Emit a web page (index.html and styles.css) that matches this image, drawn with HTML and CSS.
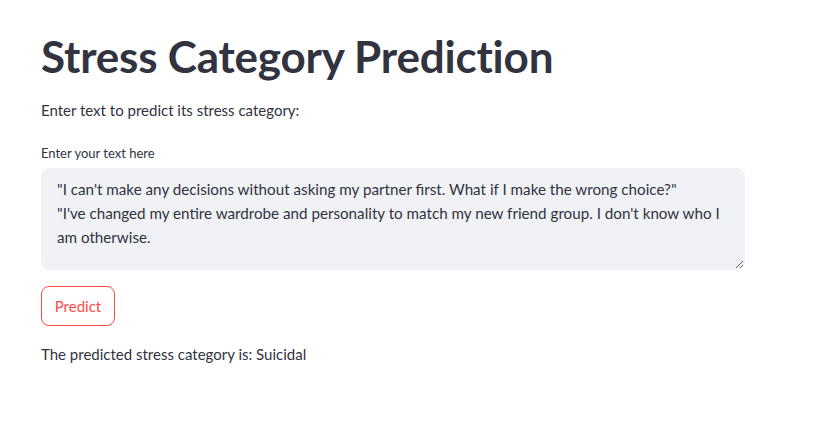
FILE: index.html
```html
<!DOCTYPE html>
<html>
<head>
<meta charset="utf-8">
<link rel="stylesheet" href="styles.css">
</head>
<body>
<main class="main">
  <h1 class="title">Stress Category Prediction</h1>
  <p class="intro">Enter text to predict its stress category:</p>
  <div class="field">
    <label class="label" for="t">Enter your text here</label>
    <textarea id="t" class="area">"I can't make any decisions without asking my partner first. What if I make the wrong choice?"
"I've changed my entire wardrobe and personality to match my new friend group. I don't know who I am otherwise.</textarea>
  </div>
  <button class="btn">Predict</button>
  <p class="result">The predicted stress category is: Suicidal</p>
</main>
</body>
</html>
```
FILE: styles.css
```css
html, body { margin: 0; padding: 0; background: #fff; }
body {
  font-family: "Lato", "Open Sans", sans-serif;
  color: rgb(49, 51, 63);
  font-size: 15px;
}
.main {
  width: 704px;
  padding: 26px 0 0 41px;
  display: flex;
  flex-direction: column;
}
.title {
  margin: 0;
  font-size: 44px;
  font-weight: 700;
  line-height: 60px;
  letter-spacing: -0.2px;
}
.intro {
  margin: 12px 0 0;
  line-height: 24px;
}
.field {
  margin-top: 21px;
  display: flex;
  flex-direction: column;
}
.label {
  font-size: 13px;
  line-height: 20px;
  margin-bottom: 5px;
}
.area {
  box-sizing: border-box;
  width: 704px;
  height: 102px;
  border: 1px solid rgb(240, 242, 246);
  border-radius: 8px;
  background: rgb(240, 242, 246);
  color: rgb(49, 51, 63);
  font-family: inherit;
  font-size: 15.2px;
  line-height: 24px;
  padding: 8px 15px;
  resize: vertical;
  outline: none;
}
.btn {
  align-self: flex-start;
  margin-top: 16px;
  height: 40px;
  width: 74px;
  border: 1px solid rgb(255, 75, 75);
  border-radius: 8px;
  background: #fff;
  color: rgb(255, 75, 75);
  font-family: inherit;
  font-size: 15px;
  padding: 0;
}
.result {
  margin: 16px 0 0;
  line-height: 24px;
}
```
